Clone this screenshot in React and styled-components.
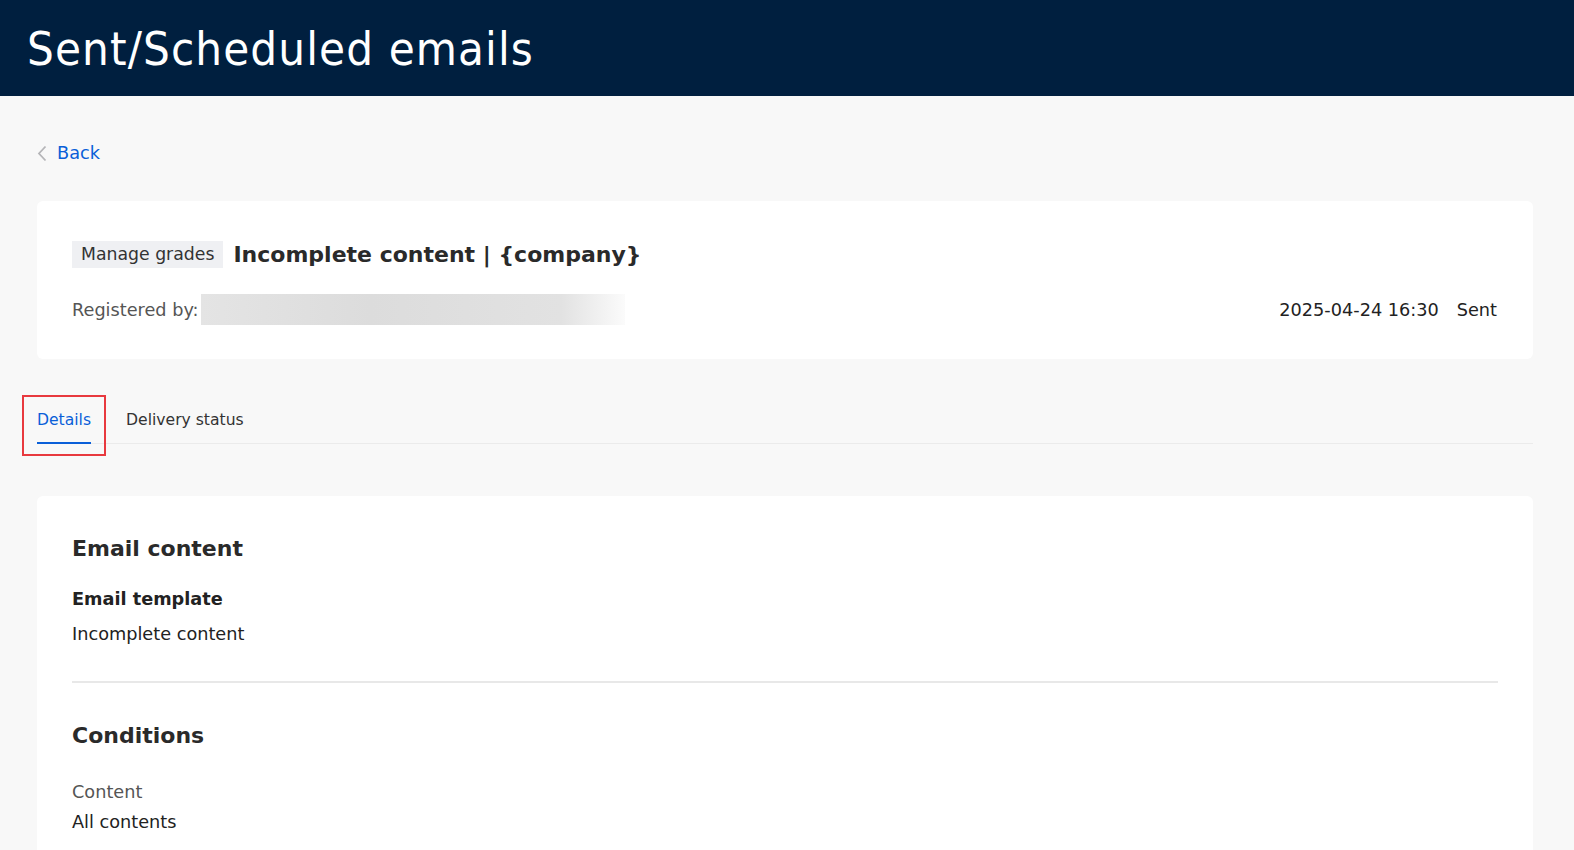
import React from 'react';
import styled, { createGlobalStyle } from 'styled-components';

const GlobalStyle = createGlobalStyle`
  html, body {
    margin: 0;
    padding: 0;
    background: #f8f8f8;
    font-family: "DejaVu Sans", sans-serif;
    color: #222;
  }
  * { box-sizing: border-box; }
`;

export const Header = styled.header`
  height: 96px;
  background: #001f3f;
  display: flex;
  align-items: center;
  padding-left: 27px;
  h1 {
    margin: 0;
    color: #fff;
    font-family: "DejaVu Sans Condensed", "DejaVu Sans", sans-serif;
    font-size: 47px;
    font-weight: normal;
    letter-spacing: 1.1px;
  }
`;

export const Main = styled.main`
  padding: 0 41px 0 37px;
`;

export const BackLink = styled.a`
  display: flex;
  align-items: center;
  gap: 10px;
  margin: 46px 0 37px;
  height: 22px;
  color: #0a5fd8;
  font-size: 17.7px;
  text-decoration: none;
  svg { color: #b5b5b8; }
`;

export const Card = styled.section`
  background: #fff;
  border-radius: 6px;
  padding: ${p => p.$padding || '36px 35px'};
`;

export const TitleRow = styled.div`
  display: flex;
  align-items: center;
  gap: 10px;
`;

export const Tag = styled.span`
  background: #eff0f3;
  padding: 2px 9px;
  font-size: 17.3px;
  color: #333;
  line-height: 23px;
`;

export const Title = styled.h2`
  margin: 0;
  font-size: 22px;
  font-weight: bold;
  color: #2a2a2a;
`;

export const MetaRow = styled.div`
  display: flex;
  align-items: center;
  justify-content: space-between;
  margin-top: 26px;
  font-size: 17.7px;
`;

export const Registered = styled.div`
  display: flex;
  align-items: center;
  color: #555;
`;

export const Blur = styled.div`
  width: 424px;
  height: 31px;
  margin-left: 2px;
  background: linear-gradient(90deg, #e4e4e4 0%, #dcdcdc 40%, #e2e2e2 85%, #fbfbfb 100%);
`;

export const Status = styled.div`
  display: flex;
  gap: 18px;
  color: #222;
`;

export const Tabs = styled.nav`
  display: flex;
  gap: 35px;
  margin-top: 40px;
  border-bottom: 1px solid #ebebeb;
`;

export const Tab = styled.div`
  position: relative;
  font-size: 15.6px;
  padding: 12px 0 13px;
  color: ${p => (p.$active ? '#0a5fd8' : '#333')};
  border-bottom: 2px solid ${p => (p.$active ? '#0a5fd8' : 'transparent')};
  margin-bottom: -1px;
`;

export const Highlight = styled.span`
  position: absolute;
  left: -15px;
  right: -15px;
  top: -4px;
  bottom: -14px;
  border: 2px solid #e8393f;
`;

export const SectionTitle = styled.h3`
  margin: 0 0 ${p => p.$mb || '28px'};
  font-size: 22px;
  font-weight: bold;
  color: #2a2a2a;
`;

export const Label = styled.div`
  font-size: 17.7px;
  font-weight: ${p => (p.$bold ? 'bold' : 'normal')};
  color: ${p => (p.$muted ? '#555' : '#222')};
  margin-bottom: ${p => p.$mb || '0'};
`;

export const Divider = styled.hr`
  border: none;
  border-top: 2px solid #e8e8e8;
  margin: 37px 0 40px;
`;

class App extends React.PureComponent {
  render() {
    return (
      <>
        <GlobalStyle />
        <Header>
          <h1>Sent/Scheduled emails</h1>
        </Header>
        <Main>
          <BackLink href="#">
            <svg width="10" height="17" viewBox="0 0 10 17" fill="none">
              <path d="M8.5 1.5L2 8.5l6.5 7" stroke="currentColor" strokeWidth="1.8" />
            </svg>
            Back
          </BackLink>
          <Card $padding="40px 36px 34px 35px">
            <TitleRow>
              <Tag>Manage grades</Tag>
              <Title>Incomplete content | {'{company}'}</Title>
            </TitleRow>
            <MetaRow>
              <Registered>
                Registered by:
                <Blur />
              </Registered>
              <Status>
                <span>2025-04-24 16:30</span>
                <span>Sent</span>
              </Status>
            </MetaRow>
          </Card>
          <Tabs>
            <Tab $active>
              Details
              <Highlight />
            </Tab>
            <Tab>Delivery status</Tab>
          </Tabs>
          <Card $padding="40px 35px 40px" style={{ marginTop: 52 }}>
            <SectionTitle $mb="28px">Email content</SectionTitle>
            <Label $bold $mb="15px">Email template</Label>
            <Label>Incomplete content</Label>
            <Divider />
            <SectionTitle $mb="34px">Conditions</SectionTitle>
            <Label $muted $mb="10px">Content</Label>
            <Label>All contents</Label>
          </Card>
        </Main>
      </>
    );
  }
}

export default App;
